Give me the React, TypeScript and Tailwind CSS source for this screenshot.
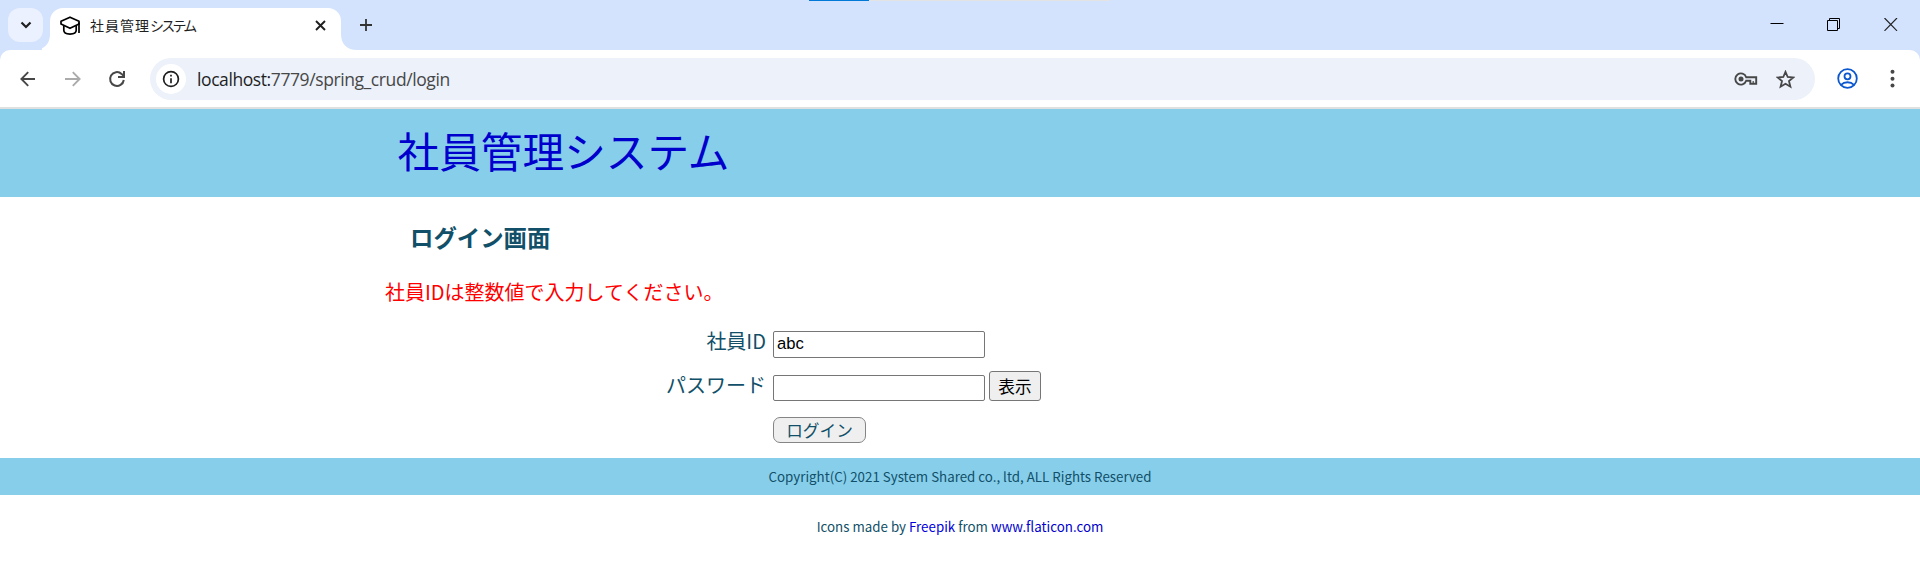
import React from "react";

const jp = "font-['Noto_Sans_CJK_JP',sans-serif]";

function TabStrip() {
  return (
    <div className="relative flex h-[50px] bg-[#d3e2fd] pl-2">
      <div className="absolute top-0 left-[809px] flex h-px w-[301px] bg-[#e3e3e3]">
        <div className="h-px w-[60px] bg-[#0078d7]" />
      </div>
      <button className="mt-2 flex h-[34px] w-[35px] items-center justify-center rounded-xl bg-[#ebf1fe]">
        <svg width="12" height="8" viewBox="0 0 12 8" fill="none" stroke="#1f1f1f" strokeWidth="2.2">
          <path d="M1.5 1.5 6 6l4.5-4.5" />
        </svg>
      </button>
      <svg className="mt-[34px] -ml-px shrink-0" width="8" height="16" viewBox="0 0 8 16" fill="#fff">
        <path d="M8 0v16H-8C2 16 8 10 8 0z" />
      </svg>
      <div className="mt-2 flex h-[42px] w-[291px] items-center rounded-t-[13px] bg-white pr-[14px] pb-[7px] pl-[10px]">
        <svg width="20" height="20" viewBox="0 0 20 20" fill="none" stroke="#000" strokeWidth="1.7" strokeLinejoin="round">
          <path d="M10 1.2 1 5.3v2.8l9 4.2 9-4.2V5.3z" />
          <path d="M3.8 9.5v4.8c0 5 12.4 5 12.4 0V9.5M19 6.5V17" />
        </svg>
        <span className={`ml-[10px] w-[106px] pb-[2px] text-[14px] leading-5 font-normal whitespace-nowrap text-[#1f1f1f] ${jp}`}>
          <span className="tracking-[1px]">社員管理</span>
          <span className="tracking-[-2.8px]">システム</span>
        </span>
        <svg className="mr-[1px] ml-auto" width="11" height="11" viewBox="0 0 11 11" stroke="#1f1f1f" strokeWidth="1.9">
          <path d="m1 1 9 9M10 1 1 10" />
        </svg>
      </div>
      <svg className="mt-[34px] shrink-0" width="16" height="16" viewBox="0 0 16 16" fill="#fff">
        <path d="M0 0v16h16C6 16 0 10 0 0z" />
      </svg>
      <svg className="mt-[19px] ml-[3px]" width="12" height="12" viewBox="0 0 12 12" stroke="#333" strokeWidth="1.8">
        <path d="M6 0v12M0 6h12" />
      </svg>
      <div className="mr-[22px] ml-auto flex gap-[42px] pt-[18px]">
        <svg width="14" height="13" viewBox="0 0 14 13" stroke="#000">
          <path d="M.5 5.5h13" />
        </svg>
        <svg className="ml-px" width="14" height="13" viewBox="0 0 14 13" fill="none" stroke="#000">
          <path d="M.5 2.5h10v10H.5zM2.5 2.5v-2h10v10h-2" />
        </svg>
        <svg className="ml-px" width="14" height="13" viewBox="0 0 14 13" stroke="#222" strokeWidth="1.2">
          <path d="m.5 0 12.5 12.8M13 0 .5 12.8" />
        </svg>
      </div>
    </div>
  );
}

function Toolbar() {
  return (
    <div className="h-[59px] border-b-2 border-[#dfe1e0] bg-[#d3e2fd]">
      <div className="flex h-[57px] items-start rounded-t-[10px] bg-white pt-2 pl-5">
        <svg className="mt-[13px]" width="16" height="16" viewBox="0 0 16 16" fill="none" stroke="#474747" strokeWidth="1.9">
          <path d="M15 8H1.8M8.2 1.2 1.4 8l6.8 6.8" />
        </svg>
        <svg className="mt-[13px] ml-[29px]" width="16" height="16" viewBox="0 0 16 16" fill="none" stroke="#ababab" strokeWidth="1.9">
          <path d="M0 8h14.2M7.8 1.2 14.6 8l-6.8 6.8" />
        </svg>
        <svg className="mt-[12px] ml-[27px]" width="18" height="18" viewBox="0 0 18 18" fill="none" stroke="#474747" strokeWidth="2">
          <path d="M15.8 10A6.9 6.9 0 1 1 13.6 3.9L16 6.2M16 1v6h-6" />
        </svg>
        <div className="ml-6 flex h-[42px] w-[1665px] items-center rounded-full bg-[#ecf1fa] pl-[6px]">
          <div className="flex size-[30px] items-center justify-center rounded-full bg-white">
            <svg width="18" height="18" viewBox="0 0 18 18" fill="none" stroke="#1f1f1f" strokeWidth="1.7">
              <circle cx="9" cy="9" r="7.4" />
              <path d="M9 8.2v5M9 4.8v1.8" />
            </svg>
          </div>
          <div className="ml-[11px] font-['Open_Sans',sans-serif] text-[17.5px] tracking-[-0.41px] whitespace-nowrap text-[#474747]">
            <span className="text-[#1f1f1f]">localhost:</span>7779/spring_crud/login
          </div>
          <svg className="ml-auto" width="24" height="14" viewBox="0 0 24 14" fill="none" stroke="#474747" strokeWidth="1.9">
            <path d="M12.2 5.2A5.6 5.6 0 1 0 12.2 8.8h4.1v3h5.9V5.2z" />
            <circle cx="7" cy="7" r="2.5" fill="#474747" stroke="none" />
            <path d="M19.2 9v2.5" strokeWidth="1.2" />
          </svg>
          <svg className="mr-5 ml-[18px]" width="19" height="19" viewBox="0 0 19 19" fill="none" stroke="#474747" strokeWidth="1.8">
            <path d="m9.5 1.8 2.2 5.2 5.6.5-4.3 3.6 1.4 5.6-4.9-3-4.9 3L6 11.1 1.7 7.5 7.3 7z" />
          </svg>
        </div>
        <svg className="mt-[10px] ml-[22px]" width="21" height="21" viewBox="0 0 21 21" fill="none" stroke="#0b57d0" strokeWidth="1.8">
          <circle cx="10.5" cy="10.5" r="9.3" />
          <circle cx="10.5" cy="8.3" r="3" />
          <path d="M4 16.8c3.5-3.4 9.5-3.4 13 0" />
        </svg>
        <svg className="mt-[11px] ml-8" width="5" height="20" viewBox="0 0 5 20" fill="#474747">
          <circle cx="2.5" cy="2.8" r="2" />
          <circle cx="2.5" cy="9.8" r="2" />
          <circle cx="2.5" cy="16.6" r="2" />
        </svg>
      </div>
    </div>
  );
}

function LoginForm() {
  return (
    <form className="flex flex-col pt-4 text-xl text-[#115068]">
      <div className="flex h-[45px] items-center">
        <label className="w-[381px] pb-[7px] text-right leading-7">社員ID</label>
        <input
          className="ml-[7px] h-[27px] w-[212px] rounded-[2px] border border-[#767676] bg-white px-[3px] pb-[2px] font-['Liberation_Sans',sans-serif] text-[16.67px] text-black"
          defaultValue="abc"
        />
      </div>
      <div className="flex h-[42px] items-center">
        <label className="w-[381px] pb-[6px] text-right leading-7">パスワード</label>
        <input type="password" className="ml-[7px] h-[26px] w-[212px] rounded-[2px] border border-[#767676] bg-white" />
        <button type="button" className="mb-1 ml-1 h-[30px] w-[52px] rounded-[3px] border border-[#767676] bg-[#efefef] text-[16.67px] leading-6 text-black">
          表示
        </button>
      </div>
      <div className="flex h-[42px] items-center">
        <button type="button" className="ml-[388px] h-[26px] w-[93px] rounded-[7px] border border-[#858585] bg-[#efefef] text-[16.67px] leading-6">
          ログイン
        </button>
      </div>
    </form>
  );
}

export default function App() {
  return (
    <div className={`h-[581px] overflow-hidden bg-white ${jp}`}>
      <TabStrip />
      <Toolbar />
      <header className="flex h-[88px] items-center bg-[#87ceeb] pb-[7px] pl-[397.5px]">
        <h1 className="text-[41.67px] leading-[60px] font-normal text-[#0000cd]">社員管理システム</h1>
      </header>
      <main className="h-[261px] pl-[385px]">
        <h2 className="pt-[22px] pl-[25px] text-[23.4px] leading-9 font-bold text-[#115068]">ログイン画面</h2>
        <p className="pt-[23px] text-xl leading-7 text-[#ff0000]">社員IDは整数値で入力してください。</p>
        <LoginForm />
      </main>
      <footer className="text-center text-[13.33px] text-[#115068]">
        <div className="flex h-[37px] items-center justify-center bg-[#87ceeb] pt-px">
          Copyright(C) 2021 System Shared co., ltd, ALL Rights Reserved
        </div>
        <p className="pt-[22px] leading-5">
          Icons made by <a className="text-[#0000dd]">Freepik</a> from <a className="text-[#0000cd]">www.flaticon.com</a>
        </p>
      </footer>
    </div>
  );
}
